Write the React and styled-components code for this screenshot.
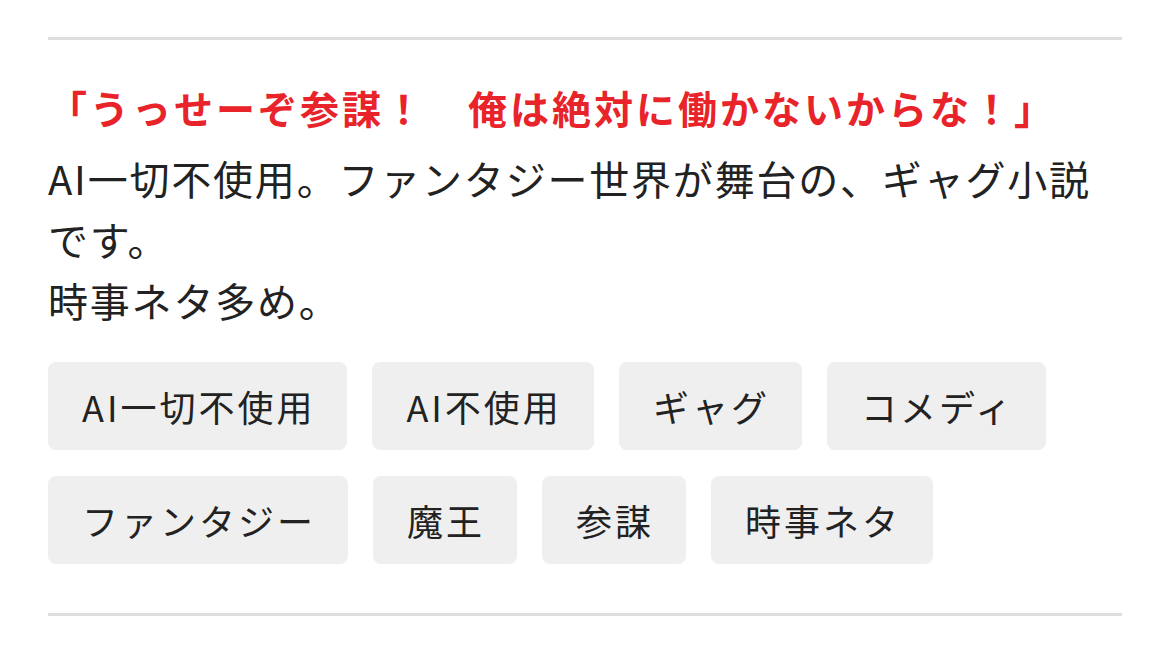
import React from "react";
import styled, { createGlobalStyle } from "styled-components";

const tags = [
  "AI一切不使用",
  "AI不使用",
  "ギャグ",
  "コメディ",
  "ファンタジー",
  "魔王",
  "参謀",
  "時事ネタ",
];

const App = () => {
  return (
    <>
      <GlobalStyle />
      <Wrapper>
        <Divider />
        <Catch>「うっせーぞ参謀！　俺は絶対に働かないからな！」</Catch>
        <Intro>
          AI一切不使用。ファンタジー世界が舞台の、ギャグ小説
          <br />
          です。
          <br />
          時事ネタ多め。
        </Intro>
        <TagList>
          {tags.map((tag) => (
            <Tag key={tag}>{tag}</Tag>
          ))}
        </TagList>
        <Divider />
      </Wrapper>
    </>
  );
};

export default App;

const GlobalStyle = createGlobalStyle`
  body {
    margin: 0;
    background: #fff;
    font-family: "Noto Sans CJK JP", "Noto Sans", sans-serif;
    color: #222;
  }
`;

const Wrapper = styled.div`
  padding: 37px 47px 0 48px;
`;

const Divider = styled.div`
  height: 3px;
  background: #dedede;
`;

const Catch = styled.p`
  margin: 37px 0 10px;
  font-size: 39px;
  line-height: 61px;
  font-weight: 700;
  letter-spacing: 3px;
  color: #e8242a;
  white-space: nowrap;
`;

const Intro = styled.p`
  margin: 0;
  font-size: 40px;
  line-height: 61px;
  letter-spacing: 1.8px;
  color: #222;
  white-space: nowrap;
`;

const TagList = styled.div`
  display: flex;
  flex-wrap: wrap;
  gap: 26px 25px;
  margin: 31px 0 49px;
`;

const Tag = styled.span`
  padding: 18px 32px 18px 34px;
  font-size: 36px;
  line-height: 52px;
  letter-spacing: 3px;
  background: #f0efef;
  border-radius: 8px;
  color: #222;
`;
